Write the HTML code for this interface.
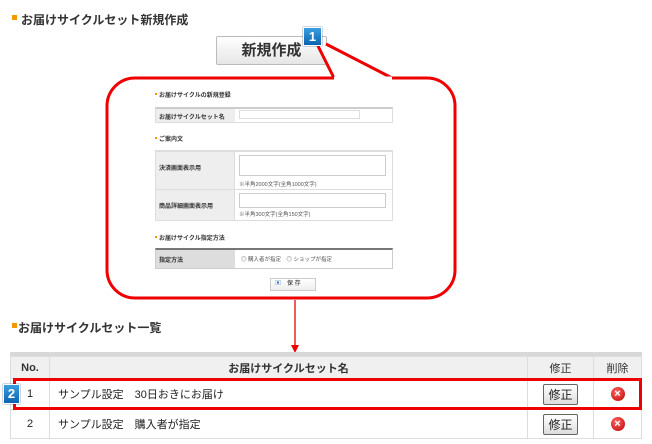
<!DOCTYPE html>
<html><head><meta charset="utf-8"><style>
*{margin:0;padding:0;box-sizing:border-box}
body{width:652px;height:444px;background:#fff;position:relative;overflow:hidden;font-family:"Liberation Sans","Noto Sans CJK JP",sans-serif;color:#222}
.a{position:absolute}
.h{font-size:12px;font-weight:bold;color:#333}
.sq{width:5px;height:5px;background:#f39800}
.s{font-size:6px;font-weight:bold;color:#333}
.sm{font-size:5.5px;color:#555}
.badge{background:linear-gradient(#3aa0e0,#0b63b0);color:#fff;font-weight:bold;font-size:13px;text-align:center;border:1px solid #fff;box-shadow:0 0 1px #036}
td,th{border:1px solid #ddd}
.x{display:inline-block;width:14px;height:14px;border-radius:50%;background:radial-gradient(circle at 40% 35%,#f66,#b00);color:#fff;font-size:11px;line-height:14px;font-weight:bold}
.b{display:inline-block;border:1px solid #666;border-radius:2px;background:linear-gradient(#fff,#ddd);padding:1px 4px;font-size:12px}
</style></head><body>
<div class="a sq" style="left:12px;top:15px"></div>
<div class="a h" style="left:21px;top:11px">お届けサイクルセット新規作成</div>
<div class="a" style="left:216px;top:36px;width:111px;height:29px;border:1px solid #bbb;border-radius:2px;background:linear-gradient(#fff,#e6e6e6);font-size:15px;text-align:center;line-height:27px;color:#333;font-weight:bold">新規作成</div>
<svg class="a" style="left:0;top:0" width="652" height="444">
<rect x="107" y="78" width="348" height="220" rx="28" fill="none" stroke="#e00" stroke-width="3"/>
<polyline points="318,46 334,78 392,78 326,44" fill="#fff" stroke="#e00" stroke-width="3" stroke-linejoin="miter"/>
<line x1="334" y1="78" x2="392" y2="78" stroke="#fff" stroke-width="3"/>
<line x1="295" y1="300" x2="295" y2="346" stroke="#e00" stroke-width="1.3"/>
<polygon points="291,345 299,345 295,353" fill="#e00"/>
</svg>
<div class="a badge" style="left:303px;top:27px;width:19px;height:19px;line-height:17px">1</div>
<div class="a sq" style="left:155px;top:93px;width:2px;height:2px"></div>
<div class="a s" style="left:159px;top:90px">お届けサイクルの新規登録</div>
<div class="a" style="left:155px;top:107px;width:238px;height:16px;border:1px solid #ddd;border-top:2px solid #ccc"></div>
<div class="a" style="left:156px;top:109px;width:79px;height:13px;background:#eee"></div>
<div class="a s" style="left:159px;top:112px">お届けサイクルセット名</div>
<div class="a" style="left:239px;top:110px;width:121px;height:9px;border:1px solid #ddd"></div>
<div class="a sq" style="left:155px;top:137px;width:2px;height:2px"></div>
<div class="a s" style="left:159px;top:134px">ご案内文</div>
<div class="a" style="left:155px;top:150px;width:238px;height:71px;border:1px solid #ddd;border-top:2px solid #ddd"></div>
<div class="a" style="left:156px;top:152px;width:79px;height:68px;background:#eee;border-right:1px solid #ddd"></div>
<div class="a" style="left:156px;top:189px;width:237px;height:1px;background:#ddd"></div>
<div class="a s" style="left:159px;top:163px">決済画面表示用</div>
<div class="a s" style="left:159px;top:201px">商品詳細画面表示用</div>
<div class="a" style="left:239px;top:155px;width:147px;height:21px;border:1px solid #ccc"></div>
<div class="a sm" style="left:239px;top:180px">※半角2000文字(全角1000文字)</div>
<div class="a" style="left:239px;top:193px;width:147px;height:15px;border:1px solid #ccc"></div>
<div class="a sm" style="left:239px;top:210px">※半角300文字(全角150文字)</div>
<div class="a sq" style="left:155px;top:236px;width:2px;height:2px"></div>
<div class="a s" style="left:159px;top:233px">お届けサイクル指定方法</div>
<div class="a" style="left:155px;top:248px;width:238px;height:21px;border:1px solid #ccc;border-top:2px solid #777"></div>
<div class="a" style="left:156px;top:250px;width:79px;height:18px;background:#ddd"></div>
<div class="a s" style="left:159px;top:255px">指定方法</div>
<div class="a sm" style="left:241px;top:255px">◎ 購入者が指定　◎ ショップが指定</div>
<div class="a" style="left:270px;top:278px;width:46px;height:13px;border:1px solid #ccc;background:linear-gradient(#fff,#eee);font-size:6px;line-height:11px;padding-left:4px"><span style="color:#36c">▣</span>　保 存</div>
<div class="a sq" style="left:12px;top:323px"></div>
<div class="a h" style="left:18px;top:319px">お届けサイクルセット一覧</div>
<div class="a" style="left:10px;top:352px;width:632px;height:4px;background:#d8d8d8"></div>
<table class="a" style="left:10px;top:356px;width:632px;border-collapse:collapse;font-size:11px">
<tr style="height:22px;background:#f0f0f0;font-weight:bold;color:#333"><th style="width:39px">No.</th><th style="width:478px">お届けサイクルセット名</th><th style="width:66px;font-weight:normal">修正</th><th style="font-weight:normal">削除</th></tr>
<tr style="height:31px"><td style="text-align:center">1</td><td style="padding-left:8px">サンプル設定　30日おきにお届け</td><td style="text-align:center"><span class="b">修正</span></td><td style="text-align:center"><span class="x">×</span></td></tr>
<tr style="height:29px"><td style="text-align:center">2</td><td style="padding-left:8px">サンプル設定　購入者が指定</td><td style="text-align:center"><span class="b">修正</span></td><td style="text-align:center"><span class="x">×</span></td></tr>
</table>
<div class="a" style="left:13px;top:378px;width:629px;height:32px;border:3px solid #e00"></div>
<div class="a badge" style="left:3px;top:384px;width:17px;height:20px;line-height:18px">2</div>
</body></html>
